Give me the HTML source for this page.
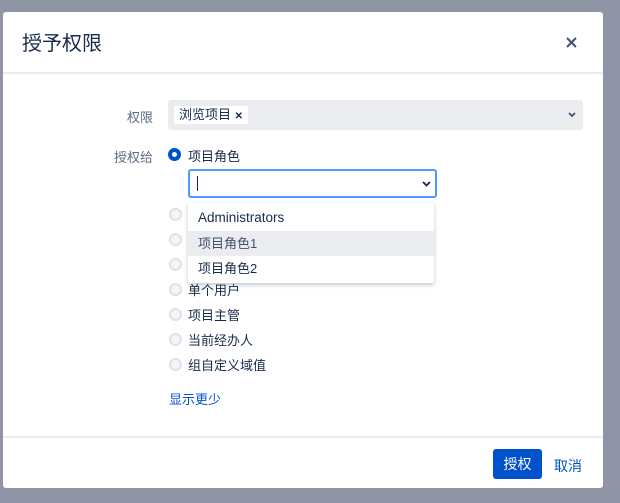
<!DOCTYPE html>
<html><head><meta charset="utf-8"><style>
*{box-sizing:border-box;margin:0;padding:0}
body{width:620px;height:503px;background:#8f95a4;position:relative;overflow:hidden;font-family:"Liberation Sans","Noto Sans CJK SC",sans-serif;color:#172b4d;font-size:14px}
.dlg{position:absolute;left:3px;top:12px;width:600px;height:476px;background:#fff;border-radius:3px}
.t{position:absolute;left:19px;top:15px;font-size:20px;color:#172b4d}
.lbl{position:absolute;font-size:13px;color:#5e6c84;text-align:right;width:60px}
.hr{position:absolute;left:0;width:600px;height:2px;background:#ebecf0}
.abs{position:absolute}
.rad{position:absolute;left:166px;width:13px;height:13px;border-radius:50%;border:2px solid #dfe1e6;background:#f4f5f7}
.opt{position:absolute;left:188px;font-size:13px}
</style></head><body>
<div class="dlg">
<div class="t">授予权限</div>
<svg class="abs" style="left:563px;top:25px" width="11" height="11" viewBox="0 0 11 11"><path d="M1 1L10 10M10 1L1 10" stroke="#42526e" stroke-width="2"/></svg>
<div class="hr" style="top:60px"></div>
<div class="lbl" style="left:90px;top:95px">权限</div>
<div class="abs" style="left:165px;top:88px;width:415px;height:30px;background:#ebecf0;border-radius:3px"></div>
<div class="abs" style="left:171px;top:94px;height:18px;padding:0 5px;background:#fff;font-size:13px;line-height:18px;border-radius:2px">浏览项目 <span style="font-size:10px;font-weight:bold">✕</span></div>
<svg class="abs" style="left:565px;top:100px" width="8" height="6" viewBox="0 0 8 6"><path d="M1 1L4 4L7 1" stroke="#42526e" stroke-width="1.8" fill="none"/></svg>
<div class="lbl" style="left:90px;top:135px">授权给</div>
<div class="abs" style="left:165px;top:136px;width:13px;height:13px;border-radius:50%;border:4px solid #0052cc;background:#fff"></div>
<div class="abs" style="left:185px;top:134px;font-size:13px">项目角色</div>
<div class="abs" style="left:185px;top:157px;width:249px;height:29px;border:2px solid #4c9aff;border-radius:3px"></div>
<div class="abs" style="left:194px;top:164px;width:1px;height:15px;background:#172b4d"></div>
<svg class="abs" style="left:419px;top:169px" width="9" height="6" viewBox="0 0 9 6"><path d="M1 1L4.5 4.5L8 1" stroke="#172b4d" stroke-width="1.8" fill="none"/></svg>
<div class="rad" style="top:196px"></div>
<div class="rad" style="top:221px"></div>
<div class="rad" style="top:246px"></div>
<div class="rad" style="top:271px"></div><div class="opt" style="left:185px;top:268px">单个用户</div>
<div class="rad" style="top:296px"></div><div class="opt" style="left:185px;top:293px">项目主管</div>
<div class="rad" style="top:321px"></div><div class="opt" style="left:185px;top:318px">当前经办人</div>
<div class="rad" style="top:346px"></div><div class="opt" style="left:185px;top:343px">组自定义域值</div>
<div class="abs" style="left:166px;top:377px;font-size:13px;color:#0052cc">显示更少</div>
<div class="abs" style="left:185px;top:191px;width:246px;height:80px;background:#fff;box-shadow:0 2px 4px rgba(9,30,66,.25);border-radius:2px;padding-top:2px">
<div style="height:26px;line-height:26px;padding-left:10px;font-size:13.5px">Administrators</div>
<div style="height:25px;line-height:25px;padding-left:10px;font-size:13px;background:#ebecf0;color:#42526e">项目角色1</div>
<div style="height:25px;line-height:25px;padding-left:10px;font-size:13px">项目角色2</div>
</div>
<div class="hr" style="top:424px"></div>
<div class="abs" style="left:490px;top:437px;width:49px;height:30px;background:#0052cc;border-radius:3px;color:#fff;font-size:14px;line-height:30px;text-align:center">授权</div>
<div class="abs" style="left:551px;top:444px;color:#0052cc;font-size:14px">取消</div>
</div>
</body></html>
